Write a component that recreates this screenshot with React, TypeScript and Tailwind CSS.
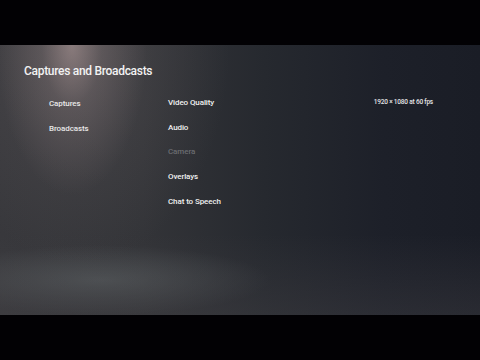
import React from "react";

// PS5-style settings screen: Captures and Broadcasts

const SECTIONS = ["Captures", "Broadcasts"];

const ITEMS: { label: string; value?: string; disabled?: boolean }[] = [
  { label: "Video Quality", value: "1920 × 1080 at 60 fps" },
  { label: "Audio" },
  { label: "Camera", disabled: true },
  { label: "Overlays" },
  { label: "Chat to Speech" },
];

export default function App() {
  return (
    <div className="w-[480px] h-[360px] bg-black flex flex-col overflow-hidden font-['Roboto','Noto_Sans',sans-serif]">
      <div className="h-[45px] shrink-0 bg-[#020104]" />

      <main className="relative h-[270px] shrink-0 overflow-hidden bg-[linear-gradient(90deg,#38383c_0%,#333438_30%,#26292f_55%,#1d2029_80%,#1a1d26_100%)]">
        {/* spotlight + floor glow */}
        <div className="absolute inset-0 bg-[radial-gradient(ellipse_75px_150px_at_72px_0px,rgba(160,140,140,0.85)_0%,rgba(120,108,110,0.45)_40%,rgba(0,0,0,0)_100%)]" />
        <div className="absolute inset-0 bg-[radial-gradient(ellipse_150px_220px_at_80px_0px,rgba(120,112,114,0.3)_0%,rgba(0,0,0,0)_100%)]" />
        <div className="absolute inset-0 bg-[radial-gradient(ellipse_170px_35px_at_100px_235px,rgba(100,106,108,0.55)_0%,rgba(0,0,0,0)_100%)]" />
        <div className="absolute inset-0 bg-[linear-gradient(180deg,rgba(0,0,0,0)_70%,rgba(70,68,72,0.35)_100%)]" />

        <div className="relative flex flex-col pl-[24px] pt-[18px]">
          <h1 className="text-[12px] leading-[16px] tracking-[-0.3px] text-[#f2f2f2] font-medium">
            Captures and Broadcasts
          </h1>

          <div className="flex mt-[12px] pl-[25px]">
            <ul className="w-[119px] flex flex-col">
              {SECTIONS.map((s) => (
                <li
                  key={s}
                  className="h-[25.5px] flex items-center text-[8px] text-[#e8e8e8] font-medium tracking-[-0.1px]"
                >
                  {s}
                </li>
              ))}
            </ul>

            <ul className="w-[265px] flex flex-col">
              {ITEMS.map((it) => (
                <li
                  key={it.label}
                  className={
                    "relative h-[24.6px] flex items-center justify-between text-[8px] font-medium tracking-[-0.1px] " +
                    (it.disabled ? "text-[#6a6c70]" : "text-[#f0f0f0]")
                  }
                >
                  <span>{it.label}</span>
                  {it.value && (
                    <span className="relative text-[6.5px] text-[#e4e4e6] tracking-[-0.2px]">
                      <span className="absolute -inset-x-[40px] -inset-y-[4px] -z-10 bg-[radial-gradient(ellipse_at_70%_50%,rgba(120,124,130,0.35)_0%,rgba(0,0,0,0)_70%)]" />
                      {it.value}
                    </span>
                  )}
                </li>
              ))}
            </ul>
          </div>
        </div>
      </main>

      <div className="flex-1 bg-[#020104]" />
    </div>
  );
}
